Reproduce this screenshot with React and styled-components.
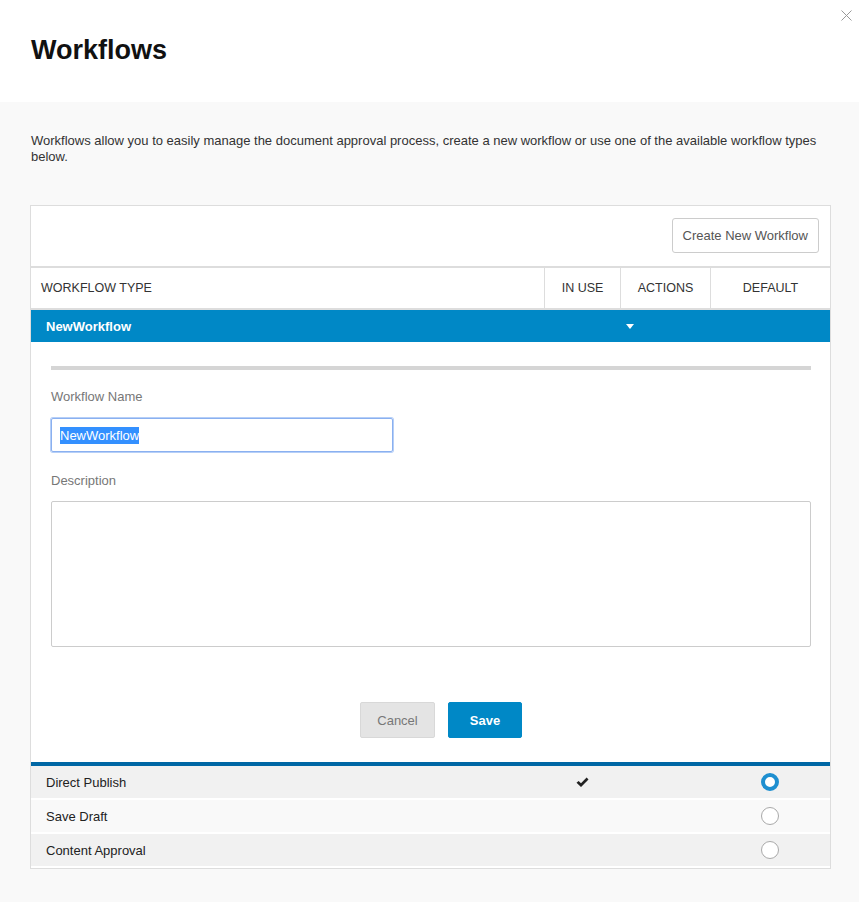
import React from "react";
import styled, { createGlobalStyle } from "styled-components";

const Global = createGlobalStyle`
  body {
    margin: 0;
    background: #f9f9f9;
    font-family: "Liberation Sans", Arial, sans-serif;
    color: #333;
  }
`;

const COLS = "513px 76px 90px 1fr";

const Header = styled.header`
  position: relative;
  height: 102px;
  background: #fff;
  padding: 34px 0 0 31px;
  box-sizing: border-box;
`;

const Title = styled.h1`
  margin: 0;
  font-size: 27px;
  line-height: 32px;
  font-weight: 600;
  color: #111;
`;

const Close = styled.button`
  position: absolute;
  top: 10px;
  right: 7px;
  width: 11px;
  height: 11px;
  padding: 0;
  border: 0;
  background: none;
  display: flex;
`;

const Body = styled.main`
  padding: 31px 28px 34px 30px;
`;

const Intro = styled.p`
  margin: 0 0 40px 1px;
  font-size: 13px;
  line-height: 16px;
  color: #333;
`;

const Panel = styled.section`
  background: #fff;
  border: 1px solid #ddd;
`;

const Toolbar = styled.div`
  height: 62px;
  display: flex;
  justify-content: flex-end;
  align-items: flex-start;
  padding: 12px 11px 0 0;
  box-sizing: border-box;
  border-bottom: 2px solid #ddd;
`;

const GhostButton = styled.button`
  height: 35px;
  padding: 0 10px;
  background: #fff;
  border: 1px solid #ccc;
  border-radius: 3px;
  font-family: inherit;
  font-size: 13px;
  color: #555;
`;

const HeadRow = styled.div`
  display: grid;
  grid-template-columns: ${COLS};
  height: 40px;
  border-bottom: 2px solid #ddd;
`;

const HeadCell = styled.div`
  display: flex;
  align-items: center;
  justify-content: ${(p) => (p.$left ? "flex-start" : "center")};
  padding-left: ${(p) => (p.$left ? "10px" : "0")};
  border-left: ${(p) => (p.$left ? "none" : "1px solid #ddd")};
  font-size: 12.5px;
  text-transform: uppercase;
  color: #333;
`;

const ActiveRow = styled.div`
  display: grid;
  grid-template-columns: ${COLS};
  height: 32px;
  align-items: center;
  background: #0088c6;
  color: #fff;
  font-size: 13px;
  font-weight: 700;
`;

const RowName = styled.div`
  padding-left: 15px;
`;

const Caret = styled.span`
  margin-left: 6px;
  width: 0;
  height: 0;
  border-left: 4px solid transparent;
  border-right: 4px solid transparent;
  border-top: 5px solid #fff;
  display: block;
`;

const Form = styled.div`
  padding: 24px 19px 24px 20px;
  border-bottom: 4px solid #0067a5;
`;

const Divider = styled.div`
  height: 4px;
  background: #d5d5d5;
`;

const Label = styled.label`
  display: block;
  font-size: 13px;
  line-height: 16px;
  color: #777;
  margin: ${(p) => p.$mt} 0 ${(p) => p.$mb};
`;

const NameField = styled.div`
  width: 342px;
  height: 34px;
  box-sizing: border-box;
  border: 1px solid #8ab0f0;
  border-radius: 2px;
  box-shadow: 0 0 0 1px #b6cff7;
  display: flex;
  align-items: center;
  padding-left: 8px;
  font-size: 13px;
`;

const Selected = styled.span`
  background: #3390ff;
  color: #fff;
  line-height: 17px;
`;

const TextArea = styled.div`
  height: 146px;
  box-sizing: border-box;
  border: 1px solid #ccc;
  border-radius: 2px;
`;

const Actions = styled.div`
  display: flex;
  justify-content: center;
  gap: 13px;
  margin-top: 55px;
  padding-left: 20px;
`;

const Button = styled.button`
  height: 36px;
  width: ${(p) => p.$w}px;
  border-radius: 2px;
  font-family: inherit;
  font-size: 13px;
  border: 1px solid ${(p) => (p.$primary ? "#0088c6" : "#d8d8d8")};
  background: ${(p) => (p.$primary ? "#0088c6" : "#e4e4e4")};
  color: ${(p) => (p.$primary ? "#fff" : "#777")};
  font-weight: ${(p) => (p.$primary ? 700 : 400)};
`;

const Row = styled.div`
  display: grid;
  grid-template-columns: ${COLS};
  height: 32px;
  align-items: center;
  background: ${(p) => (p.$odd ? "#f1f1f1" : "#f9f9f9")};
  border-bottom: 2px solid #fff;
  font-size: 13px;
  color: #222;
`;

const Center = styled.div`
  display: flex;
  justify-content: center;
  align-items: center;
`;

const Radio = styled.span`
  width: 18px;
  height: 18px;
  box-sizing: border-box;
  border-radius: 50%;
  background: #fff;
  border: ${(p) => (p.$on ? "4px solid #1e8fd0" : "1px solid #a9a9a9")};
  display: block;
`;

const CheckIcon = () => (
  <svg width="13" height="11" viewBox="0 0 13 11">
    <path d="M0.5 5.8L2.6 3.9L5 6.3L10.6 0.5L12.5 2.4L5 10Z" fill="#222" />
  </svg>
);

const TYPES = [
  { name: "Direct Publish", inUse: true, def: true },
  { name: "Save Draft", inUse: false, def: false },
  { name: "Content Approval", inUse: false, def: false },
];

export default function App() {
  return (
    <>
      <Global />
      <Header>
        <Title>Workflows</Title>
        <Close aria-label="Close">
          <svg width="11" height="11" viewBox="0 0 11 11">
            <path d="M0.5 0.5L10.5 10.5M10.5 0.5L0.5 10.5" stroke="#999" strokeWidth="1" />
          </svg>
        </Close>
      </Header>
      <Body>
        <Intro>
          Workflows allow you to easily manage the document approval process, create a new workflow or use one of the available workflow types below.
        </Intro>
        <Panel>
          <Toolbar>
            <GhostButton>Create New Workflow</GhostButton>
          </Toolbar>
          <HeadRow>
            <HeadCell $left>Workflow Type</HeadCell>
            <HeadCell>In Use</HeadCell>
            <HeadCell>Actions</HeadCell>
            <HeadCell>Default</HeadCell>
          </HeadRow>
          <ActiveRow>
            <RowName>NewWorkflow</RowName>
            <div />
            <div><Caret /></div>
            <div />
          </ActiveRow>
          <Form>
            <Divider />
            <Label $mt="19px" $mb="13px">Workflow Name</Label>
            <NameField><Selected>NewWorkflow</Selected></NameField>
            <Label $mt="21px" $mb="12px">Description</Label>
            <TextArea />
            <Actions>
              <Button $w={75}>Cancel</Button>
              <Button $w={74} $primary>Save</Button>
            </Actions>
          </Form>
          {TYPES.map((t, i) => (
            <Row key={t.name} $odd={i % 2 === 0}>
              <RowName>{t.name}</RowName>
              <Center>{t.inUse && <CheckIcon />}</Center>
              <div />
              <Center><Radio $on={t.def} /></Center>
            </Row>
          ))}
        </Panel>
      </Body>
    </>
  );
}
